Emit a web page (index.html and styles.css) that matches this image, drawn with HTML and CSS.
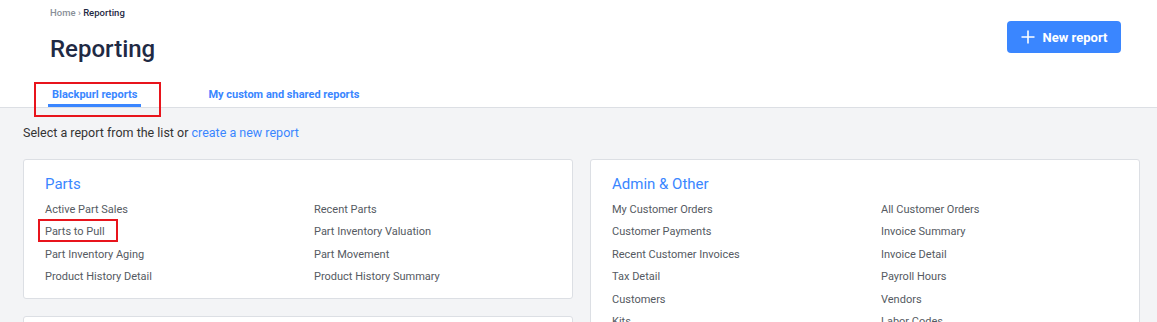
FILE: index.html
```html
<!DOCTYPE html>
<html lang="en">
<head>
    <meta charset="UTF-8">
    <meta name="viewport" content="width=device-width, initial-scale=1.0">
    <title>Reporting</title>
    <link rel="stylesheet" href="styles.css">
</head>
<body>

<header class="page-header">
    <div class="header-top">
        <div class="title-block">
            <div class="breadcrumb"><span class="crumb-home">Home</span> <span class="crumb-sep">&rsaquo;</span> <span class="crumb-current">Reporting</span></div>
            <h1>Reporting</h1>
        </div>
        <button class="btn-new">
            <svg width="14" height="14" viewBox="0 0 14 14"><path d="M7 0.5v13M0.5 7h13" stroke="#fff" stroke-width="1.6" fill="none"/></svg>
            <span>New report</span>
        </button>
    </div>
    <nav class="tabs">
        <a class="tab active">Blackpurl reports</a>
        <a class="tab">My custom and shared reports</a>
    </nav>
</header>

<main class="content">
    <p class="intro">Select a report from the list or <a class="link">create a new report</a></p>

    <div class="cards">
        <div class="column">
            <section class="card">
                <h2>Parts</h2>
                <ul class="report-list">
                    <li>Active Part Sales</li>
                    <li>Recent Parts</li>
                    <li>Parts to Pull</li>
                    <li>Part Inventory Valuation</li>
                    <li>Part Inventory Aging</li>
                    <li>Part Movement</li>
                    <li>Product History Detail</li>
                    <li>Product History Summary</li>
                </ul>
            </section>
            <section class="card card-empty"></section>
        </div>
        <div class="column">
            <section class="card">
                <h2>Admin &amp; Other</h2>
                <ul class="report-list">
                    <li>My Customer Orders</li>
                    <li>All Customer Orders</li>
                    <li>Customer Payments</li>
                    <li>Invoice Summary</li>
                    <li>Recent Customer Invoices</li>
                    <li>Invoice Detail</li>
                    <li>Tax Detail</li>
                    <li>Payroll Hours</li>
                    <li>Customers</li>
                    <li>Vendors</li>
                    <li>Kits</li>
                    <li>Labor Codes</li>
                </ul>
            </section>
        </div>
    </div>
</main>

<!-- annotation boxes from the screenshot -->
<div class="mark mark-tab"></div>
<div class="mark mark-item"></div>

</body>
</html>
```

FILE: styles.css
```css
body {
    margin: 0;
    font-family: Roboto, "Liberation Sans", sans-serif;
    background-color: #f3f4f6;
    color: #333;
    overflow: hidden;
}
.page-header {
    background-color: white;
    border-bottom: 1px solid #dcdfe4;
    padding: 0 36px 0 48px;
    height: 108px;
    box-sizing: border-box;
    display: flex;
    flex-direction: column;
    justify-content: space-between;
}
.header-top {
    display: flex;
    justify-content: space-between;
    align-items: flex-start;
}
.title-block {
    padding-left: 2px;
    padding-top: 7px;
}
.breadcrumb {
    font-size: 9.5px;
    font-weight: 500;
    line-height: 12px;
}
.crumb-home {
    color: #8a8f98;
}
.crumb-sep {
    color: #8a8f98;
}
.crumb-current {
    color: #1f2a44;
}
h1 {
    margin: 15px 0 0;
    font-size: 24px;
    font-weight: 500;
    line-height: 30px;
    color: #1f2a44;
}
.btn-new {
    margin-top: 21px;
    width: 114px;
    height: 32px;
    background-color: #3a86ff;
    color: white;
    border: none;
    border-radius: 4px;
    font-family: inherit;
    font-size: 13px;
    font-weight: 700;
    display: flex;
    align-items: center;
    justify-content: center;
    gap: 8px;
    padding: 0;
}
.tabs {
    display: flex;
    gap: 63px;
}
.tab {
    font-size: 11px;
    font-weight: 700;
    color: #3a86ff;
    padding: 0 4px 3px;
    border-bottom: 3px solid transparent;
    line-height: 13px;
}
.tab.active {
    border-bottom-color: #3a86ff;
}
.content {
    padding: 0 17px 0 23px;
}
.intro {
    margin: 17px 0 18px;
    font-size: 12.5px;
    line-height: 16px;
    color: #333;
}
.link {
    color: #3a86ff;
}
.cards {
    display: grid;
    grid-template-columns: 1fr 1fr;
    gap: 17px;
}
.column {
    display: flex;
    flex-direction: column;
    gap: 17px;
}
.card {
    background-color: white;
    border: 1px solid #dcdfe4;
    border-radius: 3px;
    padding: 14px 21px 9px;
}
.card-empty {
    min-height: 60px;
}
.card h2 {
    margin: 0 0 5px;
    font-size: 15px;
    font-weight: 400;
    line-height: 20px;
    color: #3a86ff;
}
.report-list {
    list-style: none;
    margin: 0;
    padding: 0;
    display: grid;
    grid-template-columns: 269px 1fr;
}
.report-list li {
    font-size: 11px;
    line-height: 22.4px;
    color: #555a62;
}
.mark {
    position: absolute;
    border: 2px solid #e8141c;
    box-sizing: border-box;
}
.mark-tab {
    left: 34px;
    top: 82px;
    width: 127px;
    height: 35px;
}
.mark-item {
    left: 38px;
    top: 219px;
    width: 80px;
    height: 23px;
}
```
